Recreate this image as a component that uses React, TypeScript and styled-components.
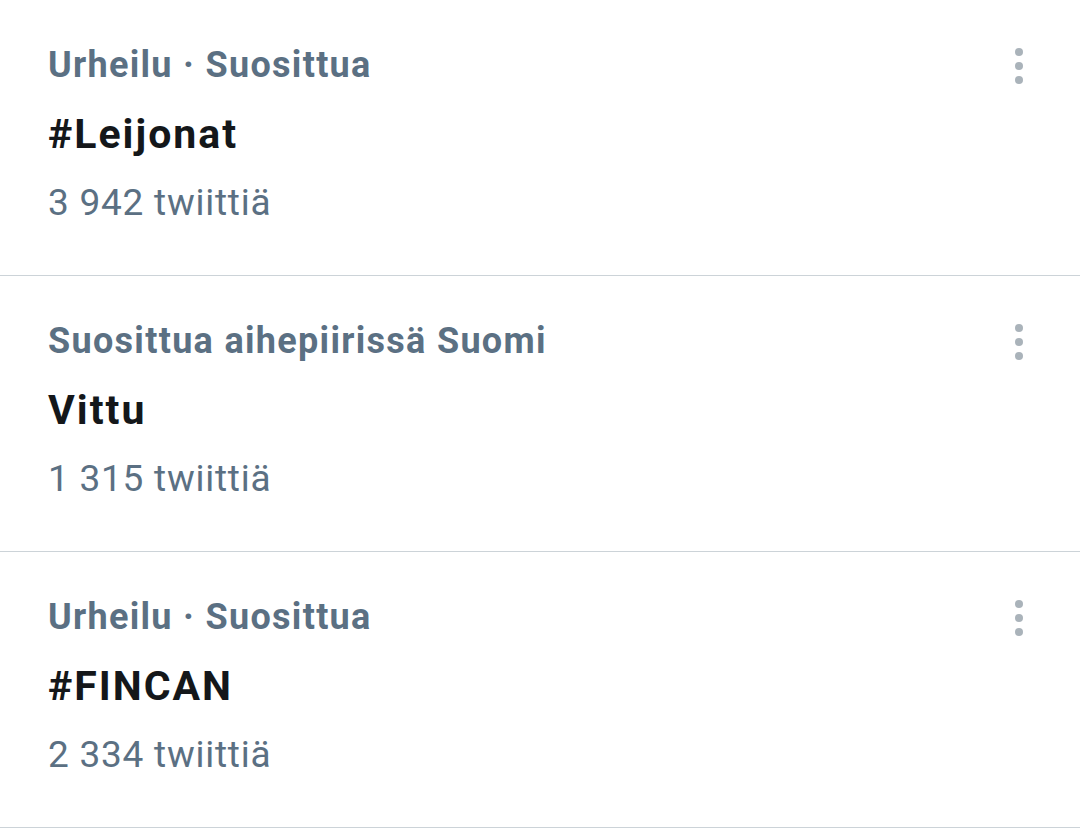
import styled, { createGlobalStyle } from 'styled-components'

const GlobalStyle = createGlobalStyle`
  html, body {
    margin: 0;
    padding: 0;
    background: #fff;
  }
  body {
    font-family: Roboto, "Noto Sans", "Liberation Sans", sans-serif;
  }
`

const List = styled.div`
  width: 1080px;
  display: flex;
  flex-direction: column;
`

const TrendRow = styled.div`
  display: flex;
  justify-content: space-between;
  align-items: flex-start;
  height: 275px;
  box-sizing: content-box;
  padding-left: 48px;
  border-bottom: 1px solid #ccd3d8;
`

const TrendBody = styled.div`
  display: flex;
  flex-direction: column;
  padding-top: 30px;
`

const Context = styled.div`
  font-size: 36px;
  line-height: 70px;
  font-weight: 700;
  letter-spacing: 1.3px;
  color: #5b7083;
  white-space: nowrap;
`

const Title = styled.div`
  font-size: 41px;
  line-height: 68px;
  font-weight: 700;
  letter-spacing: 2px;
  color: #14171a;
  white-space: nowrap;
`

const Count = styled.div`
  font-size: 37px;
  line-height: 70px;
  font-weight: 400;
  letter-spacing: 0.75px;
  color: #5b7083;
  white-space: nowrap;
`

const MoreButton = styled.button`
  display: flex;
  flex-direction: column;
  align-items: center;
  gap: 6px;
  margin: 48px 57px 0 0;
  padding: 0;
  border: none;
  background: none;
`

const Dot = styled.span`
  width: 8px;
  height: 8px;
  border-radius: 50%;
  background: #aab3ba;
`

type Trend = {
  context: string
  title: string
  count: string
}

const trends: Trend[] = [
  { context: 'Urheilu · Suosittua', title: '#Leijonat', count: '3 942 twiittiä' },
  { context: 'Suosittua aihepiirissä Suomi', title: 'Vittu', count: '1 315 twiittiä' },
  { context: 'Urheilu · Suosittua', title: '#FINCAN', count: '2 334 twiittiä' },
]

const App = () => {
  return (
    <>
      <GlobalStyle />
      <List>
        {trends.map((t) => (
          <TrendRow key={t.title}>
            <TrendBody>
              <Context>{t.context}</Context>
              <Title>{t.title}</Title>
              <Count>{t.count}</Count>
            </TrendBody>
            <MoreButton aria-label="Lisää">
              <Dot />
              <Dot />
              <Dot />
            </MoreButton>
          </TrendRow>
        ))}
      </List>
    </>
  )
}

export default App
